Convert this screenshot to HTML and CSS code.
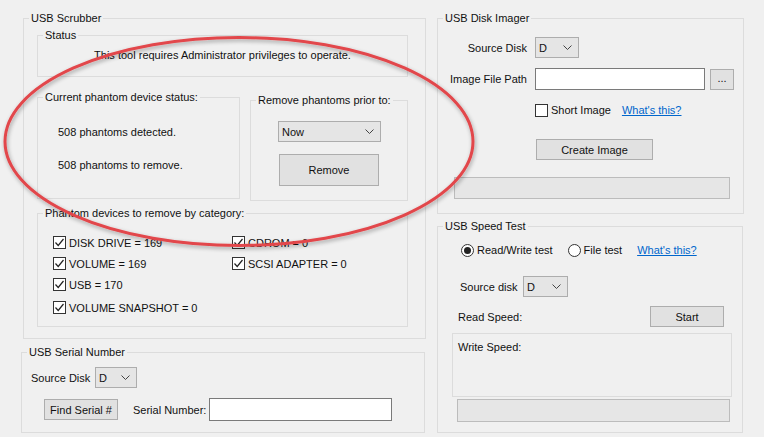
FILE: index.html
```html
<!DOCTYPE html>
<html>
<head>
<meta charset="utf-8">
<link rel="stylesheet" href="styles.css">
</head>
<body>
<div class="window">
  <div class="col-left">
    <div class="group scrubber">
      <span class="title">USB Scrubber</span>
      <div class="group status">
        <span class="title">Status</span>
        <div class="status-text">This tool requires Administrator privileges to operate.</div>
      </div>
      <div class="row-pair">
        <div class="group current">
          <span class="title">Current phantom device status:</span>
          <div class="line first">508 phantoms detected.</div>
          <div class="line second">508 phantoms to remove.</div>
        </div>
        <div class="group remove">
          <span class="title">Remove phantoms prior to:</span>
          <div class="combo combo-now"><span>Now</span><svg class="chev" width="9" height="5" viewBox="0 0 9 5"><polyline points="0.5,0.5 4.5,4.5 8.5,0.5"/></svg></div>
          <div class="btn btn-remove">Remove</div>
        </div>
      </div>
      <div class="group cats">
        <span class="title">Phantom devices to remove by category:</span>
        <div class="cat-grid">
          <div class="cat"><span class="chk"><svg width="11" height="11" viewBox="0 0 11 11"><polyline points="1.5,5.5 4.2,8.5 9.5,2"/></svg></span>DISK DRIVE = 169</div>
          <div class="cat"><span class="chk"><svg width="11" height="11" viewBox="0 0 11 11"><polyline points="1.5,5.5 4.2,8.5 9.5,2"/></svg></span>CDROM = 0</div>
          <div class="cat"><span class="chk"><svg width="11" height="11" viewBox="0 0 11 11"><polyline points="1.5,5.5 4.2,8.5 9.5,2"/></svg></span>VOLUME = 169</div>
          <div class="cat"><span class="chk"><svg width="11" height="11" viewBox="0 0 11 11"><polyline points="1.5,5.5 4.2,8.5 9.5,2"/></svg></span>SCSI ADAPTER = 0</div>
          <div class="cat"><span class="chk"><svg width="11" height="11" viewBox="0 0 11 11"><polyline points="1.5,5.5 4.2,8.5 9.5,2"/></svg></span>USB = 170</div>
          <div class="cat empty"></div>
          <div class="cat last"><span class="chk"><svg width="11" height="11" viewBox="0 0 11 11"><polyline points="1.5,5.5 4.2,8.5 9.5,2"/></svg></span>VOLUME SNAPSHOT = 0</div>
        </div>
      </div>
    </div>
    <div class="group serial">
      <span class="title">USB Serial Number</span>
      <div class="srow1">
        <span class="slabel">Source Disk</span>
        <div class="combo combo-d1"><span>D</span><svg class="chev" width="9" height="5" viewBox="0 0 9 5"><polyline points="0.5,0.5 4.5,4.5 8.5,0.5"/></svg></div>
      </div>
      <div class="srow2">
        <div class="btn btn-find">Find Serial #</div>
        <span class="snlabel">Serial Number:</span>
        <div class="input input-serial"></div>
      </div>
    </div>
  </div>
  <div class="col-right">
    <div class="group imager">
      <span class="title">USB Disk Imager</span>
      <div class="irow irow1">
        <span class="ilabel">Source Disk</span>
        <div class="combo combo-d2"><span>D</span><svg class="chev" width="9" height="5" viewBox="0 0 9 5"><polyline points="0.5,0.5 4.5,4.5 8.5,0.5"/></svg></div>
      </div>
      <div class="irow irow2">
        <span class="ilabel">Image File Path</span>
        <div class="input input-path"></div>
        <div class="btn btn-dots">...</div>
      </div>
      <div class="irow irow3">
        <span class="chk chk-empty"></span>
        <span>Short Image</span>
        <span class="link link-img">What's this?</span>
      </div>
      <div class="btn btn-create">Create Image</div>
      <div class="progress progress-img"></div>
    </div>
    <div class="group speed">
      <span class="title">USB Speed Test</span>
      <div class="prow1">
        <span class="radio on"></span><span class="rtext">Read/Write test</span>
        <span class="radio second"></span><span class="rtext">File test</span>
        <span class="link link-speed">What's this?</span>
      </div>
      <div class="prow2">
        <span class="plabel">Source disk</span>
        <div class="combo combo-d3"><span>D</span><svg class="chev" width="9" height="5" viewBox="0 0 9 5"><polyline points="0.5,0.5 4.5,4.5 8.5,0.5"/></svg></div>
      </div>
      <div class="prow3">
        <span class="rlabel">Read Speed:</span>
        <div class="btn btn-start">Start</div>
      </div>
      <div class="write-box">Write Speed:</div>
      <div class="progress progress-speed"></div>
    </div>
  </div>
</div>
<svg class="annot" width="764" height="437" viewBox="0 0 764 437">
  <defs>
    <filter id="sh" x="-10%" y="-10%" width="120%" height="120%">
      <feGaussianBlur in="SourceAlpha" stdDeviation="2"/>
      <feOffset dx="1" dy="2" result="b"/>
      <feComponentTransfer><feFuncA type="linear" slope="0.35"/></feComponentTransfer>
      <feMerge><feMergeNode/><feMergeNode in="SourceGraphic"/></feMerge>
    </filter>
  </defs>
  <ellipse cx="239" cy="141.5" rx="234" ry="104" fill="none" stroke="#e2474b" stroke-width="3" filter="url(#sh)"/>
</svg>
</body>
</html>
```
FILE: styles.css
```css
* { box-sizing: border-box; }
html, body { margin: 0; padding: 0; }
body {
  width: 764px;
  height: 437px;
  overflow: hidden;
  position: relative;
  background: #f0f0f0;
  color: #111;
  font-family: "Liberation Sans", Arial, sans-serif;
  font-size: 11px;
  line-height: 14px;
}
.window { display: flex; padding: 18px 0 0 21px; }
.col-left { width: 405px; display: flex; flex-direction: column; }
.col-right { margin-left: 11px; display: flex; flex-direction: column; }

.group { border: 1px solid #dcdcdc; }
.title {
  display: block;
  width: fit-content;
  margin: -8px 0 0 5px;
  padding: 0 2px;
  background: #f0f0f0;
  line-height: 14px;
  white-space: nowrap;
}

.scrubber { margin-left: 2px; width: 403px; height: 321px; }
.status { margin: 10px 0 0 13px; width: 371px; height: 42px; }
.status-text { margin-top: 6px; text-align: center; }

.row-pair { display: flex; align-items: flex-start; gap: 10px; margin: 20px 0 0 13px; }
.current { width: 203px; height: 102px; }
.line { padding-left: 20px; }
.line.first { margin-top: 21px; }
.line.second { margin-top: 19px; }
.remove { width: 158px; height: 101px; margin-top: 3px; }

.combo {
  display: flex;
  align-items: center;
  justify-content: space-between;
  height: 21px;
  border: 1px solid #adadad;
  background: #e5e5e5;
  padding: 0 6px 0 3px;
}
.chev polyline { fill: none; stroke: #444; stroke-width: 1; }
.combo-now { width: 103px; margin: 14px 0 0 27px; }

.btn {
  display: flex;
  align-items: center;
  justify-content: center;
  border: 1px solid #adadad;
  background: #e1e1e1;
}
.btn-remove { width: 100px; height: 32px; margin: 12px 0 0 28px; }

.cats { margin: 12px 0 0 13px; width: 371px; height: 114px; }
.cat-grid {
  display: grid;
  grid-template-columns: 179px auto;
  grid-template-rows: 21px 21px 21px 23px;
  margin-top: 12px;
  padding-left: 15px;
}
.cat { display: flex; align-items: center; height: 21px; white-space: nowrap; }
.cat.last { align-self: end; }
.chk {
  display: inline-flex;
  align-items: center;
  justify-content: center;
  width: 13px;
  height: 13px;
  border: 1px solid #333;
  background: #fff;
  margin-right: 3px;
  flex: none;
}
.chk polyline { fill: none; stroke: #222; stroke-width: 1.2; }

.serial { margin-top: 13px; width: 404px; height: 81px; }
.srow1 { display: flex; align-items: center; margin: 8px 0 0 9px; }
.slabel { width: 64px; }
.combo-d1 { width: 42px; }
.srow2 { display: flex; align-items: center; margin: 10px 0 0 22px; }
.btn-find { width: 74px; height: 21px; }
.snlabel { margin-left: 15px; width: 76px; white-space: nowrap; }
.input { background: #fff; border: 1px solid #7a7a7a; }
.input-serial { width: 183px; height: 23px; }

.imager { width: 307px; height: 196px; }
.irow { display: flex; align-items: center; }
.irow1 { margin-top: 12px; }
.ilabel { width: 97px; padding-right: 8px; text-align: right; white-space: nowrap; }
.combo-d2 { width: 44px; }
.irow2 { margin-top: 10px; }
.input-path { width: 170px; height: 22px; }
.btn-dots { width: 24px; height: 21px; margin-left: 5px; padding-bottom: 3px; }
.irow3 { margin: 13px 0 0 97px; }
.link { color: #0066cc; text-decoration: underline; }
.link-img { margin-left: 11px; }
.btn-create { width: 117px; height: 21px; margin: 22px 0 0 98px; }
.progress { background: #e6e6e6; border: 1px solid #bcbcbc; }
.progress-img { width: 276px; height: 22px; margin: 17px 0 0 16px; }

.speed { margin-top: 12px; width: 306px; height: 207px; }
.prow1 { display: flex; align-items: center; height: 14px; margin: 10px 0 0 23px; }
.radio {
  display: inline-flex;
  align-items: center;
  justify-content: center;
  width: 13px;
  height: 13px;
  border: 1px solid #333;
  border-radius: 50%;
  background: #fff;
  flex: none;
}
.radio.on::after {
  content: "";
  width: 7px;
  height: 7px;
  border-radius: 50%;
  background: #222;
}
.radio.second { margin-left: 15px; }
.rtext { margin-left: 3px; }
.link-speed { margin-left: 15px; }
.prow2 { display: flex; align-items: center; margin: 19px 0 0 22px; }
.plabel { width: 63px; }
.combo-d3 { width: 45px; }
.prow3 { display: flex; align-items: center; margin: 9px 0 0 20px; }
.rlabel { width: 192px; }
.btn-start { width: 74px; height: 21px; }
.write-box {
  width: 280px;
  height: 64px;
  margin: 6px 0 0 14px;
  border: 1px solid #dcdcdc;
  padding: 6px 0 0 5px;
}
.progress-speed { width: 273px; height: 23px; margin: 2px 0 0 19px; }

.annot { position: absolute; left: 0; top: 0; pointer-events: none; }
```
